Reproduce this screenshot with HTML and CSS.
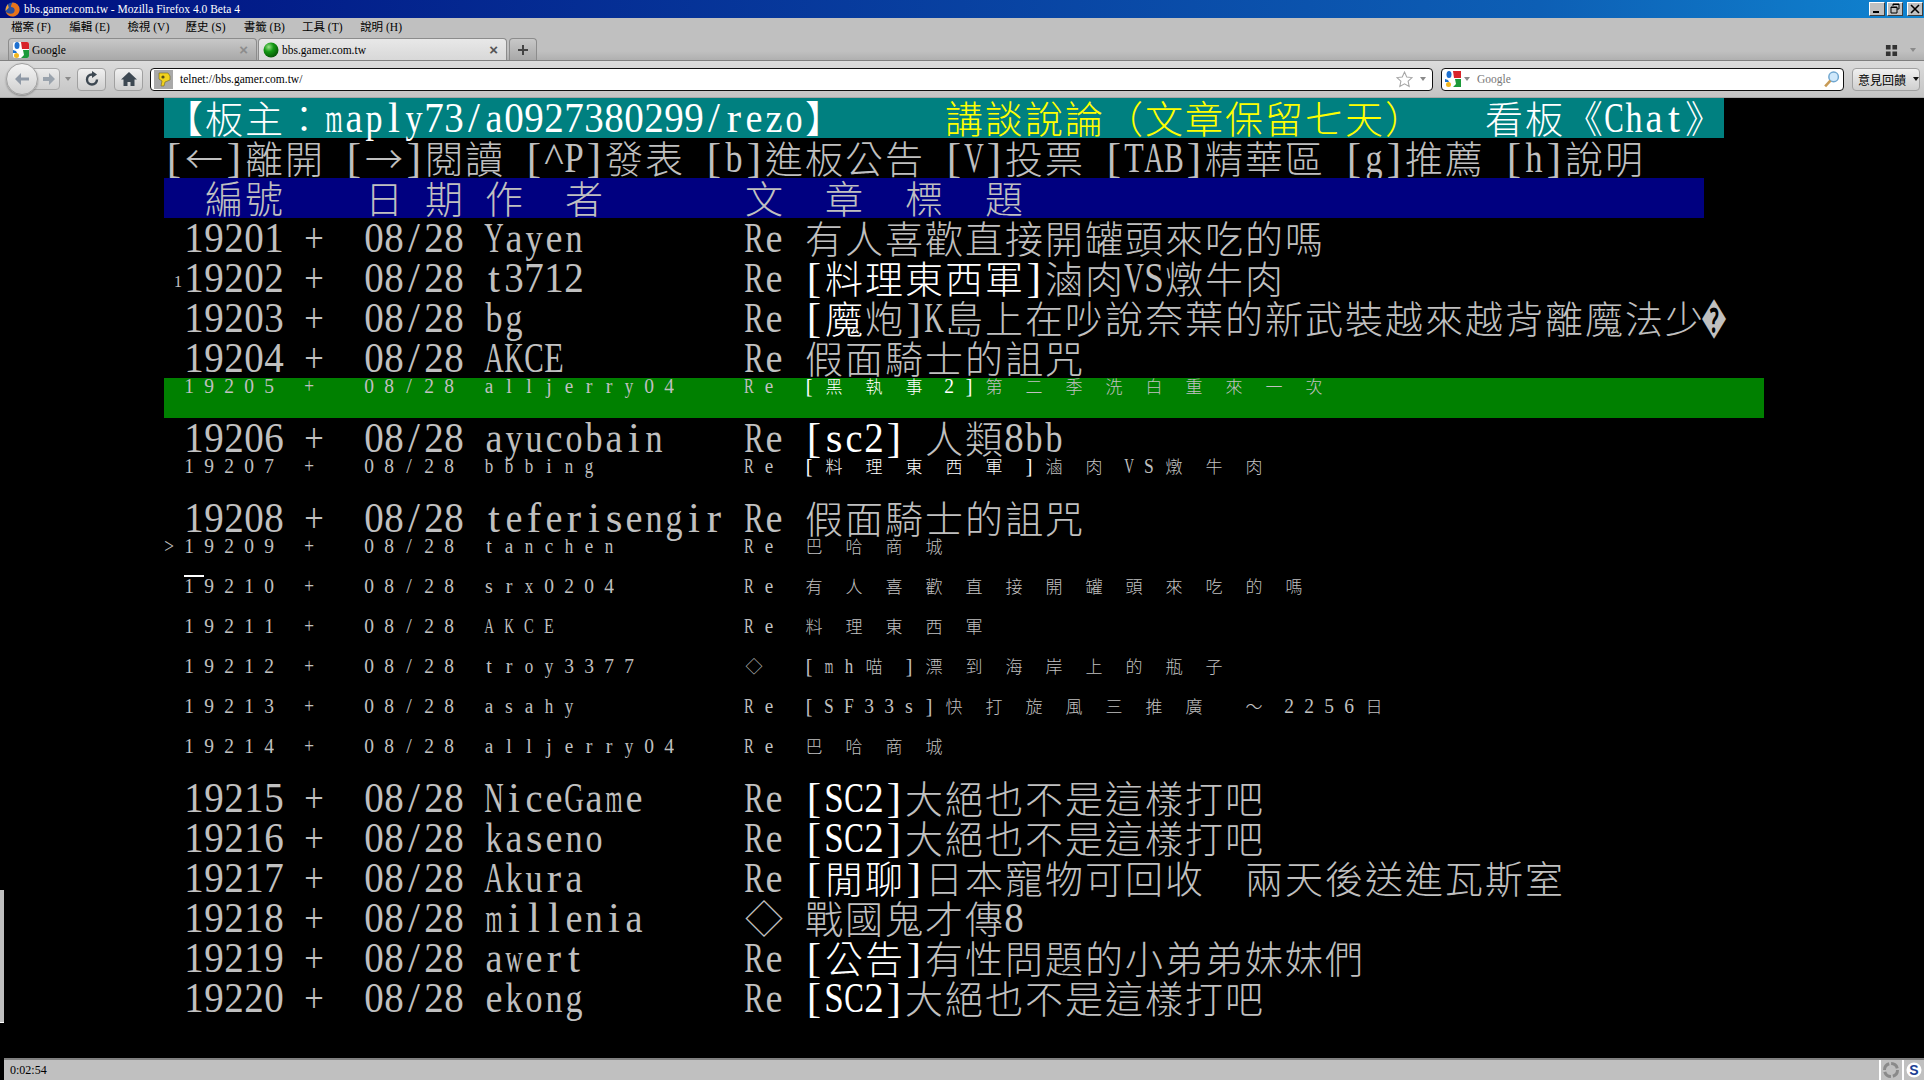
FILE: index.html
```html
<!DOCTYPE html>
<html lang="zh-Hant">
<head>
<meta charset="utf-8">
<title>bbs.gamer.com.tw - Mozilla Firefox 4.0 Beta 4</title>
<link rel="stylesheet" href="styles.css">
</head>
<body>
<div class="sliver"></div>
<header class="titlebar">
  <svg class="ff" viewBox="0 0 16 16"><circle cx="8" cy="8" r="7.500" fill="#2b4f9e"/><path d="M8 .5a7.500 7.500 0 0 1 7.500 7.500c0 4.300-3.300 7.500-7.500 7.500-3.300 0-6.400-2.100-7.500-5.400 1 1.100 3.200 2.400 5.400 2.400 3 0 4.400-2 4.400-4.100 0-2-2-3.100-4-3.100 0-2 1-3.300 1.700-4.800z" fill="#e8731a"/><path d="M3 2.500C1.800 4.500.5 6 .6 9.500l3.400-3.500z" fill="#f2a33a"/></svg>
  <span class="titletext">bbs.gamer.com.tw - Mozilla Firefox 4.0 Beta 4</span>
  <div class="winbtns">
    <span class="winbtn"><svg viewBox="0 0 12 12"><rect x="2" y="8" width="6" height="2" fill="#000"/></svg></span>
    <span class="winbtn"><svg viewBox="0 0 12 12"><path d="M4 3V1h6v5H8M2 4h6v6H2z M2 4.500h6M4 1.500h6" fill="none" stroke="#000"/></svg></span>
    <span class="winbtn close"><svg viewBox="0 0 12 12"><path d="M2 2l8 8M10 2l-8 8" fill="none" stroke="#000" stroke-width="1.600"/></svg></span>
  </div>
</header>
<nav class="menubar">
  <span class="menu">檔案 (F)</span><span class="menu">編輯 (E)</span><span class="menu">檢視 (V)</span><span class="menu">歷史 (S)</span><span class="menu">書籤 (B)</span><span class="menu">工具 (T)</span><span class="menu">說明 (H)</span>
</nav>
<div class="tabbar">
  <div class="tab">
    <svg class="fav" viewBox="0 0 16 16"><rect width="16" height="16" rx="2" fill="#fff"/><path d="M8 0h6a2 2 0 0 1 2 2v5H9z" fill="#d8232a"/><path d="M10 8h6v6a2 2 0 0 1-2 2H8l3-3z" fill="#1c9a3a"/><ellipse cx="4" cy="3.500" rx="2.500" ry="3.500" fill="#1c6fd0"/><path d="M0 8l3 1 1 2H0z" fill="#1c6fd0"/><circle cx="3.500" cy="13.500" r="2.500" fill="#f2b51c"/></svg>
    <span class="tabtext">Google</span><span class="tabx dim">×</span>
  </div>
  <div class="tab active">
    <svg class="fav" viewBox="0 0 16 16"><defs><radialGradient id="gb" cx=".35" cy=".3" r=".8"><stop offset="0" stop-color="#9be08a"/><stop offset=".4" stop-color="#149a14"/><stop offset="1" stop-color="#034a03"/></radialGradient></defs><circle cx="8" cy="8" r="7.500" fill="url(#gb)"/></svg>
    <span class="tabtext">bbs.gamer.com.tw</span><span class="tabx">×</span>
  </div>
  <div class="newtab">
    <svg viewBox="0 0 12 12"><path d="M6 1v10M1 6h10" stroke="#444" stroke-width="2"/></svg>
  </div>
  <div class="tabgrow"></div>
  <svg class="panorama" viewBox="0 0 14 14"><path d="M1 1h5v5H1zM8 1h5v5H8zM1 8h5v5H1zM8 8h5v5H8z" fill="#333"/></svg>
  <span class="caret tabcaret"></span>
</div>
<div class="toolbar">
  <div class="navgroup">
    <span class="backbtn"><svg viewBox="0 0 18 18"><path d="M16 7.500H8V3L2 9l6 6v-4.500h8z" fill="#8f99a6"/></svg></span>
    <span class="fwdbtn"><svg viewBox="0 0 14 14"><path d="M1 5h6V1l6 6-6 6V9H1z" fill="#9aa3ad"/></svg></span>
    <span class="caret"></span>
  </div>
  <span class="tbbtn"><svg viewBox="0 0 16 16"><path d="M13 8.500A5 5 0 1 1 8 3.500h1" fill="none" stroke="#3d4852" stroke-width="2.400"/><path d="M8 0l5 3.500L8 7z" fill="#3d4852"/></svg></span>
  <span class="tbbtn"><svg viewBox="0 0 16 16"><path d="M8 1L0 8.500h2.500V15h4v-4h3v4h4V8.500H16z" fill="#3d4852"/></svg></span>
  <div class="urlbar">
    <span class="identity"><svg viewBox="0 0 16 16"><path d="M3 2h9l2 3v4l-5 2-1 4H5l1-5-3-2z" fill="#f2d21c" stroke="#6e6420" stroke-width=".6"/><circle cx="7" cy="6" r="1.600" fill="#554d18"/></svg></span>
    <span class="urltext">telnet://bbs.gamer.com.tw/</span>
    <svg class="star" viewBox="0 0 16 16"><path d="M8 1l2.100 4.600 5 .6-3.700 3.400 1 5L8 12.100 3.600 14.600l1-5L.9 6.200l5-.6z" fill="#fff" stroke="#a6a6a6" stroke-width="1"/></svg>
    <span class="caret"></span>
  </div>
  <div class="searchbar">
    <svg class="fav" viewBox="0 0 16 16"><rect width="16" height="16" fill="#fff"/><path d="M8 0h8v7H9z" fill="#d8232a"/><path d="M10 8h6v8H8l3-3z" fill="#1c9a3a"/><ellipse cx="4" cy="3.500" rx="2.500" ry="3.500" fill="#1c6fd0"/><path d="M0 8l3 1 1 2H0z" fill="#1c6fd0"/><circle cx="3.500" cy="13.500" r="2.500" fill="#f2b51c"/></svg>
    <span class="caret"></span>
    <span class="searchtext">Google</span>
    <svg class="glass" viewBox="0 0 16 16"><circle cx="10" cy="6" r="4.500" fill="#cfe8fb" stroke="#6fa6cf" stroke-width="1.400"/><path d="M7 9.500L2 15" stroke="#c79a55" stroke-width="2.400"/></svg>
  </div>
  <div class="feedback">意見回饋<span class="caret dark"></span></div>
</div>
<main class="screen">
  <div class="term" id="term">
<div class="row teal hi">【板主：maply73/a0927380299/rezo】     <span class="yl">講談說論（文章保留七天）</span>   看板《Chat》</div>
<div class="row">[←]離開 [→]閱讀 [^P]發表 [b]進板公告 [V]投票 [TAB]精華區 [g]推薦 [h]說明</div>
<div class="row navy">  編號    日 期 作  者       文  章  標  題</div>
<div class="row"> 19201 +  08/28 Yayen        Re 有人喜歡直接開罐頭來吃的嗎</div>
<div class="row"><span class="mark">1</span> 19202 +  08/28 t3712        Re <span class="hi">[料理東西軍]</span>滷肉VS燉牛肉</div>
<div class="row"> 19203 +  08/28 bg           Re <span class="hi">[魔</span>炮]K島上在吵說奈葉的新武裝越來越背離魔法少�</div>
<div class="row"> 19204 +  08/28 AKCE         Re 假面騎士的詛咒</div>
<div class="row small green"> 19205 +  08/28 alljerry04   Re <span class="hi">[黑執事2]</span>第二季洗白重來一次</div>
<div class="row"> 19206 +  08/28 ayucobain    Re <span class="hi">[sc2]</span> 人類8bb</div>
<div class="row small"> 19207 +  08/28 bbbing       Re <span class="hi">[料理東西軍]</span>滷肉VS燉牛肉</div>
<div class="row"> 19208 +  08/28 teferisengir Re 假面騎士的詛咒</div>
<div class="row small">&gt;19209 +  08/28 tanchen      Re 巴哈商城</div>
<div class="row small"><span class="cursor"></span> 19210 +  08/28 srx0204      Re 有人喜歡直接開罐頭來吃的嗎</div>
<div class="row small"> 19211 +  08/28 AKCE         Re 料理東西軍</div>
<div class="row small"> 19212 +  08/28 troy3377     ◇ [mh喵]漂到海岸上的瓶子</div>
<div class="row small"> 19213 +  08/28 asahy        Re [SF33s]快打旋風三推廣 ～2256日</div>
<div class="row small"> 19214 +  08/28 alljerry04   Re 巴哈商城</div>
<div class="row"> 19215 +  08/28 NiceGame     Re <span class="hi">[SC2]</span>大絕也不是這樣打吧</div>
<div class="row"> 19216 +  08/28 kaseno       Re <span class="hi">[SC2]</span>大絕也不是這樣打吧</div>
<div class="row"> 19217 +  08/28 Akura        Re <span class="hi">[閒聊]</span>日本寵物可回收  兩天後送進瓦斯室</div>
<div class="row"> 19218 +  08/28 millenia     ◇ 戰國鬼才傳8</div>
<div class="row"> 19219 +  08/28 awert        Re <span class="hi">[公告]</span>有性問題的小弟弟妹妹們</div>
<div class="row"> 19220 +  08/28 ekong        Re <span class="hi">[SC2]</span>大絕也不是這樣打吧</div>
  </div>
</main>
<footer class="statusbar">
  <span class="timer">0:02:54</span>
  <span class="stgrow"></span>
  <span class="stcell"><svg viewBox="0 0 16 16"><circle cx="8" cy="8" r="6.500" fill="none" stroke="#8a8a8a" stroke-width="3" stroke-dasharray="8 2"/></svg></span>
  <span class="stcell"><svg viewBox="0 0 16 16"><circle cx="8" cy="8" r="7.500" fill="#fff"/><text x="8" y="13" text-anchor="middle" class="stext">S</text></svg></span>
</footer>
<script src="script.js"></script>
</body>
</html>
```
FILE: styles.css
```css
* { box-sizing: border-box; }
html, body { margin: 0; height: 100%; }
body {
  width: 1924px; height: 1080px; overflow: hidden;
  display: flex; flex-direction: column;
  background: #000; position: relative;
  font-family: "Liberation Serif", "Noto Sans CJK TC", serif;
  font-size: 12px; color: #000;
}
.sliver { position: absolute; left: 0; top: 890px; width: 4px; height: 133px; background: #c0c0c0; border-bottom: 1px solid #fff; }
.titlebar {
  height: 18px; flex: none; display: flex; align-items: center;
  padding: 0 1px 0 5px; gap: 4px; color: #fff;
  background: linear-gradient(90deg, #000f80, #0d5fb5 80%, #1084d0);
}
.ff { width: 15px; height: 15px; }
.titletext { flex: 1; font-size: 11.500px; }
.winbtns { display: flex; gap: 2px; }
.winbtn { width: 16px; height: 14px; background: #c0c0c0; border: 1px solid; border-color: #fff #404040 #404040 #fff; display: flex; }
.winbtn.close { margin-left: 2px; }
.winbtn svg { width: 100%; height: 100%; }
.menubar { height: 20px; flex: none; display: flex; align-items: flex-start; padding-left: 11px; background: #c0c0c0; line-height: 19px; }
.menu { width: 58.200px; font-size: 11.500px; }
.tabbar {
  height: 23px; flex: none; display: flex; align-items: flex-end; padding-left: 8px;
  background: linear-gradient(#c0c0c0 60%, #b0b0b0);
  border-bottom: 1px solid #808080;
}
.tab {
  width: 249px; height: 22px; display: flex; align-items: center; gap: 3px; padding: 0 8px 0 4px;
  border: 1px solid #8c8c8c; border-bottom: 0; border-radius: 4px 4px 0 0;
  background: linear-gradient(#c8c8c8, #a8a8a8); margin-right: 1px;
}
.tab.active { background: linear-gradient(#e8e8e8, #d8d8d8); }
.fav { width: 16px; height: 16px; flex: none; }
.tabtext { flex: 1; font-size: 11.500px; }
.tabx { font: bold 15px "Liberation Sans", sans-serif; color: #555; }
.tabx.dim { color: #8c8c8c; }
.newtab { width: 28px; height: 22px; margin-left: 1px; display: flex; align-items: center; justify-content: center; border: 1px solid #8c8c8c; border-bottom: 0; border-radius: 4px 4px 0 0; background: linear-gradient(#c8c8c8, #a8a8a8); }
.newtab svg { width: 12px; height: 12px; }
.tabgrow { flex: 1; }
.panorama { width: 13px; height: 13px; margin: 0 12px 3px 0; }
.caret { width: 0; height: 0; flex: none; border: 3px solid transparent; border-top: 4px solid #8a8a8a; border-bottom: 0; }
.tabcaret { margin: 0 8px 8px 0; }
.caret.dark { border-top-color: #111; margin-left: 7px; }
.toolbar {
  height: 37px; flex: none; display: flex; align-items: center; gap: 8px; padding: 0 4px 0 6px;
  background: linear-gradient(#dcdcdc, #c4c4c4);
  border-bottom: 1px solid #a8a8a8;
}
.navgroup { width: 63px; height: 30px; display: flex; align-items: center; position: relative; }
.backbtn {
  width: 32px; height: 32px; flex: none; border-radius: 50%; border: 1px solid #a0a0a0;
  background: linear-gradient(#f4f4f4, #d0d0d0); display: flex; align-items: center; justify-content: center;
  position: relative; z-index: 1; box-shadow: 0 1px 2px #888;
}
.backbtn svg { width: 18px; height: 18px; }
.fwdbtn {
  width: 30px; height: 22px; margin-left: -8px; padding-left: 11px; flex: none; display: flex; align-items: center;
  border: 1px solid #a8a8a8; border-radius: 0 4px 4px 0; background: linear-gradient(#ececec, #cfcfcf);
}
.fwdbtn svg { width: 14px; height: 14px; }
.navgroup .caret { margin-left: 5px; }
.tbbtn {
  width: 29px; height: 23px; flex: none; display: flex; align-items: center; justify-content: center;
  border: 1px solid #a0a0a0; border-radius: 4px; background: linear-gradient(#f0f0f0, #cfcfcf);
}
.tbbtn svg { width: 16px; height: 16px; }
.urlbar, .searchbar {
  height: 23px; display: flex; align-items: center; background: #fff;
  border: 1px solid #111; border-radius: 4px;
}
.urlbar { flex: 1; padding: 0 6px 0 3px; gap: 7px; margin-left: -1px; }
.identity { width: 19px; height: 19px; background: #a9a9a9; display: flex; align-items: center; justify-content: center; flex: none; }
.identity svg { width: 16px; height: 16px; }
.urltext { flex: 1; font-size: 11.500px; }
.star { width: 17px; height: 17px; }
.searchbar { width: 403px; flex: none; padding: 0 3px 0 3px; gap: 3px; }
.searchtext { flex: 1; color: #777; font-size: 11.500px; margin-left: 4px; }
.glass { width: 17px; height: 18px; }
.feedback {
  width: 68px; height: 23px; flex: none; display: flex; align-items: center; padding-left: 5px;
  font: 12px "Noto Sans CJK TC", sans-serif; border: 1px solid #a0a0a0; border-radius: 4px;
  background: linear-gradient(#f0f0f0, #cfcfcf);
}
.screen { flex: 1; padding-left: 164px; background: #000; }
.term { width: 1600px; color: #c0c0c0; font-family: "Liberation Serif", "Noto Sans CJK TC", serif; }
.row { height: 40px; display: flex; align-items: flex-start; position: relative; white-space: pre; font-size: 43px; line-height: 40px; }
.row span.hi, .row span.yl { display: contents; }
.hi { color: #fff; }
.yl { color: #ffff00; }
.teal { background: #008080; width: 1560px; }
.navy { background: #000080; width: 1540px; }
.green { background: #008000; }
.mark { position: absolute; left: 10px; top: 16px; font-size: 16px; line-height: 16px; color: #c0c0c0; }
.cursor { position: absolute; left: 20px; top: -3px; width: 20px; height: 2px; background: #fff; }
.c { flex: none; width: 20px; height: 40px; display: inline-flex; justify-content: center; }
.w { width: 40px; font-family: "Noto Sans CJK TC", sans-serif; font-size: 38px; line-height: 38px; font-weight: 300; }
.small { font-size: 20px; line-height: 17px; }
.small .c { height: 20px; padding-right: 10px; transform-origin: 5px 50%; }
.small .w { padding-right: 20px; font-size: 17px; line-height: 15px; }
.statusbar {
  height: 22px; flex: none; margin-left: 4px; display: flex; align-items: center; padding-left: 6px;
  background: #c0c0c0; border-top: 2px solid #808080; font-size: 12px;
}
.stgrow { flex: 1; }
.stcell { width: 22px; height: 20px; border-left: 2px solid #fff; margin-left: 1px; display: flex; align-items: center; justify-content: center; }
.stcell svg { width: 16px; height: 16px; }
.stext { font: bold 14px "Liberation Sans", sans-serif; fill: #1c3f94; }
```
FILE: script.js
```js
// Lay the telnet screen out on its character grid: half-width glyphs take one
// 20px cell, full-width glyphs two. Wide Latin letters are squeezed into the cell.
(function () {
  var ctx = document.createElement('canvas').getContext('2d');
  function isWide(ch) {
    var code = ch.codePointAt(0);
    return (code >= 0x2190 && code <= 0x21ff) || (code >= 0x25a0 && code <= 0x25ff) ||
      (code >= 0x2e80 && code <= 0xfaff) || (code >= 0xff00 && code <= 0xffef);
  }
  function wrap(node) {
    var frag = document.createDocumentFragment();
    Array.from(node.textContent).forEach(function (ch) {
      var cell = document.createElement('span');
      cell.className = isWide(ch) ? 'c w' : 'c';
      cell.textContent = ch;
      frag.appendChild(cell);
    });
    node.parentNode.replaceChild(frag, node);
  }
  function limit(ch, small) {
    var unit = small ? 0.5 : 1;
    if (ch === '\uFFFD') return 26 * unit;
    return (/[a-z]/.test(ch) ? 17 : 19.5) * unit;
  }
  document.querySelectorAll('.row').forEach(function (row) {
    var small = row.classList.contains('small');
    var walk = function (el) {
      Array.from(el.childNodes).forEach(function (n) {
        if (n.nodeType === 3) wrap(n);
        else if (n.classList.contains('hi') || n.classList.contains('yl')) walk(n);
      });
    };
    walk(row);
    row.querySelectorAll('.c:not(.w)').forEach(function (cell) {
      ctx.font = getComputedStyle(cell).font;
      var w = ctx.measureText(cell.textContent).width;
      var max = limit(cell.textContent, small);
      if (w > max) cell.style.transform = 'scaleX(' + (max / w).toFixed(3) + ')';
    });
  });
})();
```
